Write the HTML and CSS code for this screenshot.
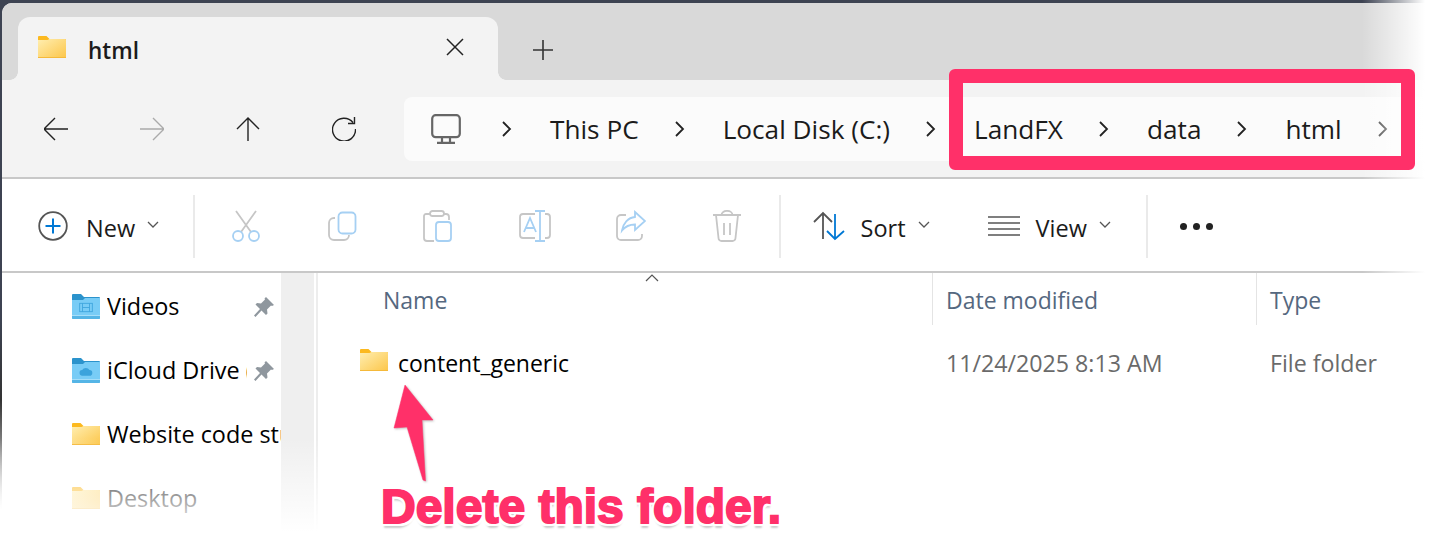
FILE: index.html
```html
<!DOCTYPE html>
<html lang="en">
<head>
<meta charset="utf-8">
<title>html - File Explorer</title>
<link rel="stylesheet" href="styles.css">
</head>
<body>
<svg class="defs" width="0" height="0" aria-hidden="true">
  <defs>
    <linearGradient id="fy" x1="0" y1="0" x2="1" y2="1">
      <stop offset="0" stop-color="#ffeeb0"/>
      <stop offset="1" stop-color="#fcc64a"/>
    </linearGradient>
    <symbol id="folder" viewBox="0 0 28 22">
      <path d="M1 0h7.500l3 3H27a1 1 0 0 1 1 1v3H0V1a1 1 0 0 1 1-1z" fill="#fcb91f"/>
      <path d="M0 4h9.500l2-1H27a1 1 0 0 1 1 1v17a1 1 0 0 1-1 1H1a1 1 0 0 1-1-1z" fill="url(#fy)"/>
      <rect y="21" width="28" height="1" fill="#f5b93a"/>
    </symbol>
    <symbol id="bfolder" viewBox="0 0 28 26">
      <path d="M1 0h8l3 3h15a1 1 0 0 1 1 1v6H0V1a1 1 0 0 1 1-1z" fill="#2b93cc"/>
      <path d="M0 6h11l2-2h15v20a1 1 0 0 1-1 1H1a1 1 0 0 1-1-1z" fill="#78ccf6"/>
      <rect y="21" width="28" height="1" fill="#a5def9"/>
      <path d="M0 22h28v2a1 1 0 0 1-1 1H1a1 1 0 0 1-1-1z" fill="#55b5e6"/>
    </symbol>
    <symbol id="pin" viewBox="0 0 22 22">
      <path d="M13 1l8 8-2 1-1-.5-4 4 .5 4-1.500 1.500-4.500-4.500L2.500 21 1 19.500l6-6.500L2.500 8.500 4 7l4 .5 4-4L11.500 2.500z" fill="#8f979e"/>
    </symbol>
  </defs>
</svg>

<div class="window">
  <header class="tabstrip">
    <div class="tab">
      <svg class="tab-folder"><use href="#folder"/></svg>
      <span class="tab-title">html</span>
      <svg class="tab-close" viewBox="0 0 18 18"><path d="M1 1l16 16M17 1L1 17"/></svg>
    </div>
    <svg class="tab-new" viewBox="0 0 20 20"><path d="M10 0v20M0 10h20"/></svg>
  </header>

  <nav class="addressbar">
    <button class="nav"><svg viewBox="0 0 24 24"><path d="M0 12h24M11 1L0 12l11 11"/></svg></button>
    <button class="nav nav-off"><svg viewBox="0 0 24 24"><path d="M0 12h24M13 1l11 11-11 11"/></svg></button>
    <button class="nav"><svg viewBox="0 0 24 24"><path d="M12 24V1M1 12L12 1l11 11"/></svg></button>
    <button class="nav"><svg viewBox="0 0 24 24"><path d="M21 5.500A11.500 11.500 0 1 0 23.500 12M22.500 0v6.500H16"/></svg></button>
    <div class="crumbs">
      <svg class="pc" viewBox="0 0 30 30"><rect x="1.200" y="1.200" width="27.600" height="22" rx="3.500"/><path d="M11 23.500v5M19 23.500v5M6 28.800h18"/></svg>
      <svg class="chev" viewBox="0 0 10 16"><path d="M1 1l7 7-7 7"/></svg>
      <span>This PC</span>
      <svg class="chev" viewBox="0 0 10 16"><path d="M1 1l7 7-7 7"/></svg>
      <span>Local Disk (C:)</span>
      <svg class="chev" viewBox="0 0 10 16"><path d="M1 1l7 7-7 7"/></svg>
      <span>LandFX</span>
      <svg class="chev" viewBox="0 0 10 16"><path d="M1 1l7 7-7 7"/></svg>
      <span>data</span>
      <svg class="chev" viewBox="0 0 10 16"><path d="M1 1l7 7-7 7"/></svg>
      <span>html</span>
      <svg class="chev chev-last" viewBox="0 0 10 16"><path d="M1 1l7 7-7 7"/></svg>
    </div>
  </nav>

  <div class="toolbar">
    <div class="tool tool-new">
      <svg class="ic-new" viewBox="0 0 30 30"><circle cx="15" cy="15" r="13.800" fill="none" stroke="#555" stroke-width="1.800"/><path d="M15 7.500v15M7.500 15h15" fill="none" stroke="#0078d4" stroke-width="2"/></svg>
      <span class="tool-label">New</span>
      <svg class="caret" viewBox="0 0 12 8"><path d="M1 1l5 5 5-5"/></svg>
    </div>
    <div class="divider"></div>
    <div class="tool-icons">
      <svg class="ic30" viewBox="0 0 30 32"><path class="g" d="M4 1l15 21M24 1L9 22"/><circle class="b" cx="6" cy="26" r="5"/><circle class="b" cx="22" cy="26" r="5"/></svg>
      <svg class="ic30" viewBox="0 0 30 32"><path class="g" d="M7 8H6a5 5 0 0 0-5 5v12a5 5 0 0 0 5 5h10a5 5 0 0 0 5-5"/><rect class="b" x="10.500" y="2.500" width="17" height="21" rx="4"/></svg>
      <svg class="ic30" viewBox="0 0 30 32"><path class="g" d="M7 4H3a2 2 0 0 0-2 2v22a3 3 0 0 0 3 3h7M21 4h2a3 3 0 0 1 3 3v3"/><rect class="g" x="7" y="1" width="14" height="5" rx="2.500"/><rect class="b" x="13" y="12" width="15" height="19" rx="3"/></svg>
      <svg class="ic30 wide" viewBox="0 0 32 32"><path class="g" d="M16 4H4a3 3 0 0 0-3 3v18a3 3 0 0 0 3 3h12M26 4h2a3 3 0 0 1 3 3v18a3 3 0 0 1-3 3h-2"/><path class="b" d="M21 1v30M16 1h10M16 31h10M5 22l6-14 6 14M7 18h8"/></svg>
      <svg class="ic30" viewBox="0 0 30 32"><path class="g" d="M10 5H5a4 4 0 0 0-4 4v17a4 4 0 0 0 4 4h17a4 4 0 0 0 4-4v-2"/><path class="b" d="M19 2l10 9-10 9v-5.500c-5 0-9 1-13 6 1-7 6-13 13-13.500z"/></svg>
      <svg class="ic30" viewBox="0 0 30 32"><path class="g" d="M1 5h28M9.500 5c0-5.500 11-5.500 11 0M4 5l2.500 23a3 3 0 0 0 3 3h11a3 3 0 0 0 3-3L26 5M12 13v12M18 13v12"/></svg>
    </div>
    <div class="divider divider-b"></div>
    <div class="tool tool-sort">
      <svg class="ic32" viewBox="0 0 32 30" fill="none" stroke-width="1.800"><path d="M10 28V2M1 11l9-9 9 9" stroke="#555"/><path d="M22 3v25M14 20l8 8 9-8" stroke="#0078d4"/></svg>
      <span class="tool-label">Sort</span>
      <svg class="caret" viewBox="0 0 12 8"><path d="M1 1l5 5 5-5"/></svg>
    </div>
    <div class="tool tool-view">
      <svg class="ic32" viewBox="0 0 32 22" fill="none" stroke="#555" stroke-width="1.600"><path d="M0 2h32M0 8h32M0 14h32M0 20h32"/></svg>
      <span class="tool-label">View</span>
      <svg class="caret" viewBox="0 0 12 8"><path d="M1 1l5 5 5-5"/></svg>
    </div>
    <div class="divider divider-c"></div>
    <div class="more"><i></i><i></i><i></i></div>
  </div>

  <main class="content">
    <aside class="sidebar">
      <ul class="tree">
        <li class="tree-row">
          <span class="tree-badge">
            <svg class="tree-icon"><use href="#bfolder"/></svg>
            <svg class="glyph" viewBox="0 0 20 14" fill="none" stroke="#3ba3dc" stroke-width="1.200"><rect x="1" y="1" width="18" height="12"/><path d="M5 1v12M15 1v12M5 7h10"/></svg>
          </span>
          <span class="tree-label">Videos</span>
          <svg class="pin"><use href="#pin"/></svg>
        </li>
        <li class="tree-row">
          <span class="tree-badge">
            <svg class="tree-icon"><use href="#bfolder"/></svg>
            <svg class="glyph" viewBox="0 0 20 14"><path d="M5 13a4 4 0 0 1-.5-8A6 6 0 0 1 15 5a4 4 0 0 1 0 8z" fill="#3ba3dc"/></svg>
          </span>
          <span class="tree-label">iCloud Drive (</span>
          <svg class="pin"><use href="#pin"/></svg>
        </li>
        <li class="tree-row">
          <svg class="tree-icon yellow"><use href="#folder"/></svg>
          <span class="tree-label">Website code stuff</span>
        </li>
        <li class="tree-row">
          <svg class="tree-icon yellow"><use href="#folder"/></svg>
          <span class="tree-label">Desktop</span>
        </li>
      </ul>
      <div class="scrolltrack"></div>
    </aside>
    <section class="list">
      <div class="list-head">
        <div class="col col-name">Name<svg class="sort-caret" viewBox="0 0 14 8"><path d="M1 7l6-6 6 6"/></svg></div>
        <div class="col col-date">Date modified</div>
        <div class="col col-type">Type</div>
      </div>
      <div class="list-row">
        <div class="cell-name"><svg class="row-folder"><use href="#folder"/></svg><span>content_generic</span></div>
        <div class="cell-date">11/24/2025 8:13 AM</div>
        <div class="cell-type">File folder</div>
      </div>
    </section>
  </main>
</div>

<div class="fade-right"></div>
<div class="fade-bottom"></div>
<div class="highlight"></div>
<svg class="arrow" viewBox="0 0 46 104"><path d="M15 5L43 40 32 40 35.500 101 33 100 17 47 4 48z" fill="#ff3069" stroke="#ff3069" stroke-width="0.500" stroke-linejoin="round"/></svg>
<div class="callout">Delete this folder.</div>
</body>
</html>
```
FILE: styles.css
```css
* { box-sizing: border-box; }
html, body { margin: 0; height: 100%; }
body {
  width: 1452px;
  height: 548px;
  overflow: hidden;
  position: relative;
  font-family: "Open Sans", "Noto Sans", sans-serif;
  color: #1b1b1b;
  background: linear-gradient(#3d4352 0, #3d4352 320px, #333 400px, #fff 510px);
}
.defs { position: absolute; }
button { border: 0; background: none; padding: 0; }
svg { display: block; flex: none; }
ul { list-style: none; margin: 0; padding: 0; }

.window {
  margin: 3px 0 0 2px;
  height: 545px;
  background: #fff;
  border-top-left-radius: 10px;
  overflow: hidden;
  display: flex;
  flex-direction: column;
}

.tabstrip {
  height: 77px;
  flex: none;
  background: #d9d9d9;
  display: flex;
  align-items: flex-end;
  padding-left: 16px;
}
.tab {
  width: 480px;
  height: 63px;
  background: #f3f3f3;
  border-radius: 12px 12px 0 0;
  display: flex;
  align-items: center;
  padding: 0 34px 0 20px;
  position: relative;
}
.tab::before, .tab::after {
  content: "";
  position: absolute;
  bottom: 0;
  width: 8px;
  height: 8px;
}
.tab::before { left: -8px; background: radial-gradient(circle at 0 0, #d9d9d9 7.500px, #f3f3f3 8px); }
.tab::after { right: -8px; background: radial-gradient(circle at 100% 0, #d9d9d9 7.500px, #f3f3f3 8px); }
.tab-folder { width: 28px; height: 22px; margin-top: -3px; }
.tab-title { font-size: 22.500px; font-weight: 600; margin-left: 22px; flex: 1; margin-top: 4px; }
.tab-close { width: 18px; height: 18px; fill: none; stroke: #222; stroke-width: 1.500; margin-top: -4px; }
.tab-new { width: 20px; height: 20px; fill: none; stroke: #333; stroke-width: 1.600; margin: 0 0 20px 35px; }

.addressbar {
  height: 99px;
  flex: none;
  background: #f3f3f3;
  border-bottom: 2px solid #c8c8c8;
  display: flex;
  align-items: center;
  padding-left: 6px;
}
.nav { width: 96px; height: 64px; display: flex; align-items: center; justify-content: center; flex: none; }
.nav svg { width: 24px; height: 24px; fill: none; stroke: #222; stroke-width: 1.400; }
.nav-off svg { stroke: #aaa; }
.crumbs {
  margin: 1px 0 0 12px;
  flex: 1;
  height: 64px;
  background: #fbfbfb;
  border-radius: 8px 0 0 8px;
  display: flex;
  align-items: center;
  gap: 36px;
  padding-left: 27px;
  font-size: 26.200px;
  white-space: nowrap;
}
.pc { width: 30px; height: 30px; fill: none; stroke: #666; stroke-width: 2.200; margin-right: 5px; }
.chev { width: 10px; height: 16px; fill: none; stroke: #222; stroke-width: 1.800; margin-right: 2px; }
.chev-last { stroke: #333; }

.toolbar {
  height: 94px;
  flex: none;
  background: #fff;
  border-bottom: 2px solid #c8c8c8;
  display: flex;
  align-items: center;
  padding: 2px 0 0 36px;
  font-size: 23.500px;
}
.tool { display: flex; align-items: center; }
.tool-label { white-space: nowrap; margin-top: 4px; }
.ic-new { width: 30px; height: 30px; }
.ic30 { width: 30px; height: 32px; fill: none; stroke-width: 1.800; }
.ic30.wide { width: 32px; }
.ic30 .g { stroke: #c6c6c6; }
.ic30 .b { stroke: #a6d0f3; }
.ic32 { width: 32px; height: 30px; }
.caret { width: 12px; height: 8px; fill: none; stroke: #555; stroke-width: 1.300; margin: -3px 0 0 12px; }
.tool-new { width: 155px; }
.tool-new .tool-label { margin-left: 18px; }
.divider { width: 2px; height: 63px; background: #eaeaea; }
.tool-icons { display: flex; align-items: center; gap: 65.500px; margin: 0 0 0 37px; }
.divider-b { margin-left: 37px; }
.tool-sort { margin-left: 32px; width: 175px; }
.tool-sort .tool-label, .tool-view .tool-label { margin-left: 16px; }
.tool-view { width: 158px; }
.tool-view .ic32 { height: 22px; }
.more { display: flex; gap: 6px; margin-left: 32px; }
.more i { width: 7px; height: 7px; border-radius: 50%; background: #222; }

.content { flex: 1; display: flex; min-height: 0; }
.sidebar { width: 316px; flex: none; display: flex; border-right: 2px solid #ededed; }
.tree { width: 279px; flex: none; overflow: hidden; padding: 2px 0 0 70px; }
.tree-row { height: 64px; display: flex; align-items: center; font-size: 23.400px; color: #000; white-space: nowrap; }
.tree-badge { position: relative; flex: none; }
.tree-icon { width: 28px; height: 26px; }
.tree-icon.yellow { height: 22px; margin-bottom: 2px; }
.glyph { position: absolute; left: 7px; top: 8px; width: 14px; height: 11px; }
.tree-label { margin-left: 7px; width: 140px; overflow: hidden; margin-top: -2px; }
.tree-row:nth-child(n+3) .tree-label { width: 174px; }
.pin { width: 22px; height: 22px; margin-left: 6px; }
.scrolltrack { width: 33px; background: #efefef; }

.list { flex: 1; position: relative; }
.list-head { height: 52px; display: flex; font-size: 23px; color: #556880; }
.col { height: 52px; display: flex; align-items: center; border-right: 1px solid #e4e4e4; padding: 2px 0 0 13px; position: relative; }
.col-name { width: 615px; padding-left: 65px; }
.col-date { width: 324px; }
.col-type { flex: 1; border-right: 0; }
.sort-caret { position: absolute; left: 327px; top: 1px; width: 14px; height: 8px; fill: none; stroke: #555; stroke-width: 1.200; }
.list-row { display: flex; height: 76px; align-items: center; font-size: 23px; color: #6a6a6a; }
.cell-name { width: 615px; padding-left: 42px; display: flex; align-items: center; color: #000; }
.row-folder { width: 28px; height: 22px; margin-top: -6px; }
.cell-name span { margin-left: 10px; }
.cell-date { width: 324px; padding-left: 13px; font-size: 23.200px; }
.cell-type { padding-left: 13px; font-size: 23.200px; }

.fade-right {
  position: absolute;
  top: 0;
  right: 0;
  width: 90px;
  height: 273px;
  background: linear-gradient(90deg, rgba(255,255,255,0), #fff 70%);
}
.fade-bottom {
  position: absolute;
  left: 0;
  bottom: 0;
  width: 320px;
  height: 110px;
  background: linear-gradient(rgba(255,255,255,0), rgba(255,255,255,.75) 65%, #fff 85%);
}
.highlight {
  position: absolute;
  left: 949px;
  top: 69px;
  width: 466px;
  height: 101px;
  border: 14px solid #ff3069;
  border-radius: 6px;
}
.arrow { position: absolute; left: 390px; top: 380px; width: 46px; height: 104px; filter: drop-shadow(1px 1px 1px rgba(0,0,0,.25)); }
.callout {
  position: absolute;
  left: 381px;
  top: 477px;
  font-family: "Liberation Sans", Arial, sans-serif;
  font-weight: 700;
  font-size: 48px;
  line-height: 60px;
  color: #ff3069;
  -webkit-text-stroke: 2px #ff3069;
  white-space: nowrap;
  text-shadow: 3px 0 0 #fff, -3px 0 0 #fff, 0 -3px 0 #fff, 0 3px 0 #fff, 2.500px 2.500px 0 #fff, -2.500px -2.500px 0 #fff, 2.500px -2.500px 0 #fff, -2.500px 2.500px 0 #fff, 0 5px 2px #ccc;
}
```
